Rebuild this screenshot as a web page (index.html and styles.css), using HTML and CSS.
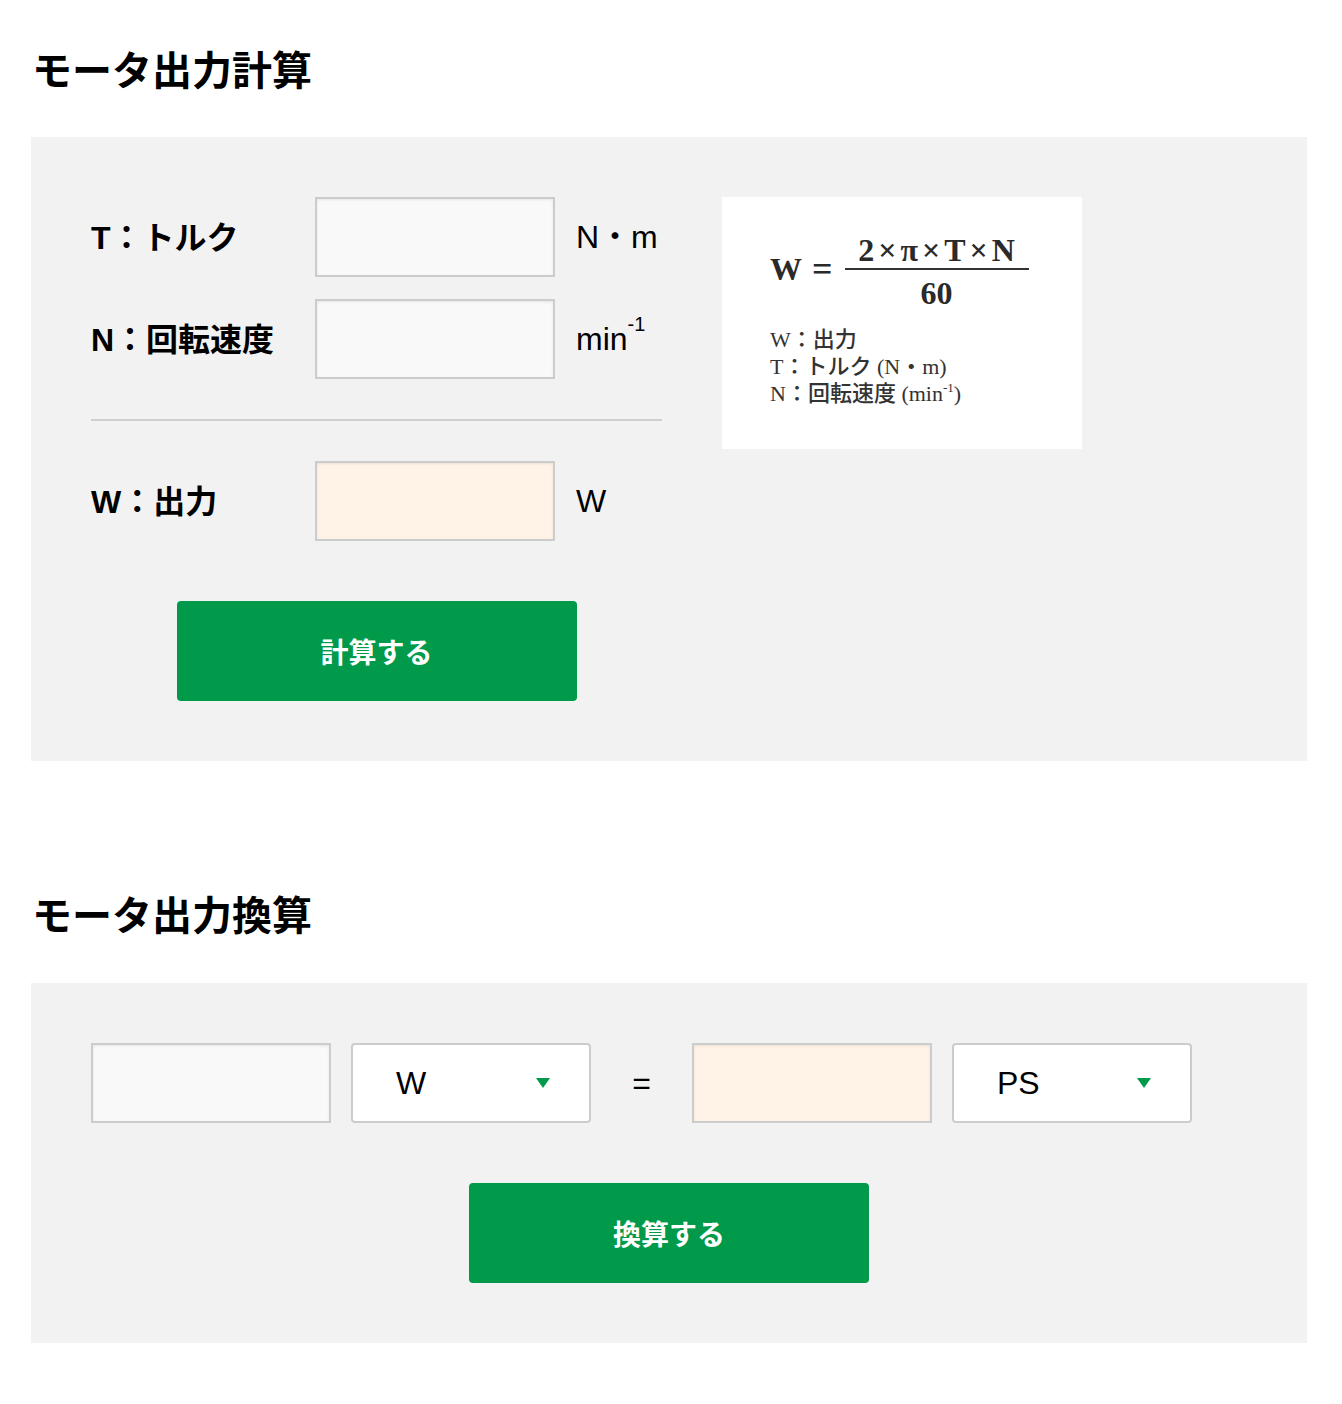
FILE: index.html
```html
<!DOCTYPE html>
<html lang="ja">
<head>
<meta charset="utf-8">
<title>モータ出力計算</title>
<link rel="stylesheet" href="styles.css">
</head>
<body>
<div class="page">
  <h2 class="title">モータ出力計算</h2>
  <div class="panel">
    <div class="calc">
      <div class="calc-main">
        <div class="row">
          <div class="label">T：トルク</div>
          <div class="field"></div>
          <div class="unit">N・m</div>
        </div>
        <div class="row">
          <div class="label">N：回転速度</div>
          <div class="field"></div>
          <div class="unit">min<sup>-1</sup></div>
        </div>
        <div class="divider"></div>
        <div class="row">
          <div class="label">W：出力</div>
          <div class="field out"></div>
          <div class="unit">W</div>
        </div>
        <div class="btn">計算する</div>
      </div>
      <div class="formula">
        <div class="eq-line">
          <span class="lhs">W</span><span class="equals">=</span>
          <span class="frac">
            <span class="num">2×π×T×N</span>
            <span class="den">60</span>
          </span>
        </div>
        <div class="legend">
          <div>W：出力</div>
          <div>T：トルク (N・m)</div>
          <div>N：回転速度 (min<sup>-1</sup>)</div>
        </div>
      </div>
    </div>
  </div>

  <h2 class="title title2">モータ出力換算</h2>
  <div class="panel">
    <div class="convert-row">
      <div class="field"></div>
      <div class="select"><span>W</span><span class="arrow"></span></div>
      <div class="eq">=</div>
      <div class="field out"></div>
      <div class="select"><span>PS</span><span class="arrow"></span></div>
    </div>
    <div class="btn">換算する</div>
  </div>
</div>
</body>
</html>
```
FILE: styles.css
```css
body {
  margin: 0;
  background: #fff;
  color: #000;
  font-family: "Liberation Sans", Arial, "Noto Sans CJK JP", sans-serif;
}

.page {
  margin-left: 31px;
  width: 1276px;
  padding-bottom: 61px;
}

.title {
  margin: 0;
  padding: 41px 0 0 1px;
  font-size: 40px;
  line-height: 60px;
  font-weight: bold;
}

.title2 {
  margin-top: 125px;
  padding-top: 0;
}

.panel {
  margin-top: 36px;
  background: #f2f2f2;
  padding: 60px;
}

.title2 + .panel {
  margin-top: 37px;
}

.calc {
  display: flex;
  align-items: flex-start;
  gap: 60px;
}

.calc-main {
  width: 571px;
}

.row {
  display: flex;
  align-items: center;
  height: 80px;
}

.row + .row {
  margin-top: 22px;
}

.label {
  width: 224px;
  font-size: 32px;
  font-weight: bold;
  position: relative;
  top: -2px;
}

.field {
  width: 240px;
  height: 80px;
  box-sizing: border-box;
  border: 2px solid #cccccc;
  background: #f9f9f9;
  box-shadow: inset 0 1px 3px rgba(0, 0, 0, 0.08);
  flex: none;
}

.field.out {
  background: #fef3e6;
}

.unit {
  margin-left: 21px;
  font-size: 32px;
  line-height: 40px;
}

.unit sup {
  font-size: 20px;
  line-height: 0;
  vertical-align: 19px;
}

.divider {
  height: 0;
  border-top: 2px solid #d0d0d0;
  margin: 40px 0 40px;
}

.btn {
  display: flex;
  justify-content: center;
  align-items: center;
  width: 400px;
  height: 100px;
  margin: 60px auto 0;
  background: #009a4a;
  color: #fff;
  border-radius: 4px;
  font-size: 28px;
  font-weight: bold;
}

.formula {
  width: 360px;
  height: 252px;
  box-sizing: border-box;
  background: #fff;
  padding: 35px 0 0 48px;
  font-family: "Liberation Serif", "Times New Roman", "Noto Sans CJK JP", serif;
  color: #2a2a2a;
}

.eq-line {
  display: flex;
  align-items: center;
}

.lhs {
  font-size: 32px;
  font-weight: bold;
  position: relative;
  top: -5px;
}

.equals {
  font-size: 36px;
  font-weight: bold;
  margin: 0 12px 0 10px;
  position: relative;
  top: -5px;
}

.frac {
  display: flex;
  flex-direction: column;
  align-items: center;
  width: 184px;
}

.num {
  display: block;
  width: 100%;
  text-align: center;
  font-size: 32px;
  font-weight: bold;
  line-height: 36px;
  letter-spacing: 4px;
  text-indent: 4px;
  border-bottom: 2px solid #333;
  padding-bottom: 0;
}

.den {
  font-size: 32px;
  font-weight: bold;
  line-height: 46px;
}

.legend {
  margin-top: 10px;
  font-size: 22px;
  line-height: 27px;
  color: #333;
  font-weight: 500;
}

.legend sup {
  font-size: 13px;
  line-height: 0;
  vertical-align: 9px;
}

.convert-row {
  display: flex;
  align-items: center;
}

.select {
  width: 240px;
  height: 80px;
  box-sizing: border-box;
  border: 2px solid #cccccc;
  border-radius: 4px;
  background: #fff;
  display: flex;
  align-items: center;
  justify-content: space-between;
  padding: 0 39px 0 43px;
  font-size: 32px;
  margin-left: 20px;
  flex: none;
}

.arrow {
  width: 0;
  height: 0;
  border-left: 7px solid transparent;
  border-right: 7px solid transparent;
  border-top: 10px solid #009a4a;
}

.eq {
  width: 101px;
  text-align: center;
  font-size: 32px;
}
```
